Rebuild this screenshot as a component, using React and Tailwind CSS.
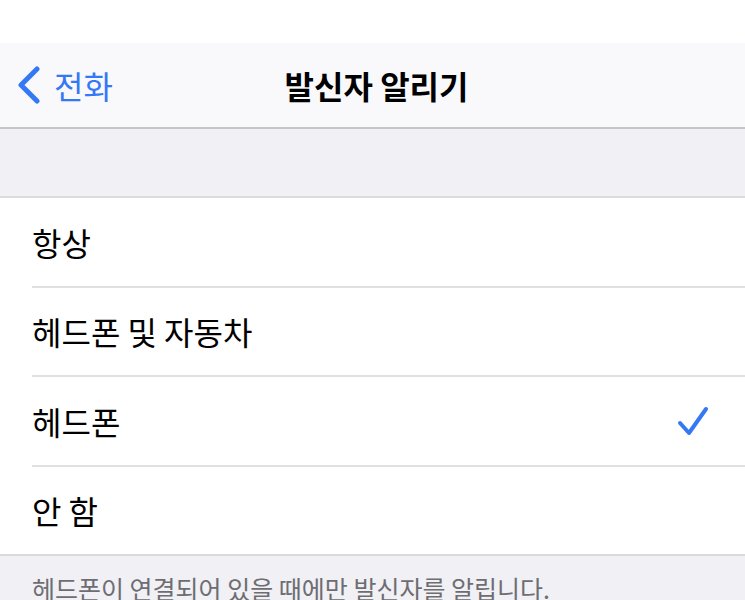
import React from 'react';

const FONT = { fontFamily: '"Noto Sans CJK KR", "Noto Sans", sans-serif' };

const options = [
    { label: '항상', checked: false },
    { label: '헤드폰 및 자동차', checked: false },
    { label: '헤드폰', checked: true },
    { label: '안 함', checked: false },
];

const Row = ({ label, checked, last }) => (
    <div className={last ? 'h-[89.5px] border-b-2 border-[#d9d9dc] bg-white' : 'bg-white pl-8'}>
        <div className={last
            ? 'h-full flex items-center pl-8 pr-9'
            : 'h-[89.5px] flex items-center pr-9 border-b-2 border-[#e0e0e3]'}>
            <span className="flex-1 text-[32px] text-black leading-none">{label}</span>
            {checked && (
                <svg width="32" height="30" viewBox="0 0 32 30" fill="none">
                    <path d="M3 17 L12 27 L29 3" stroke="#3478f6" strokeWidth="4" strokeLinecap="round" strokeLinejoin="round" />
                </svg>
            )}
        </div>
    </div>
);

export default function App() {
    return (
        <div className="w-[745px] h-[600px] overflow-hidden bg-[#f0f0f5]" style={FONT}>
            <div className="h-[43px] bg-white" />
            <div className="h-[86px] bg-[#f9f9fb] border-b-2 border-[#c6c6c9] relative flex items-center">
                <div className="flex items-center pl-[17px] text-[#3478f6]">
                    <svg width="24" height="38" viewBox="0 0 24 38" fill="none">
                        <path d="M20 3 L4 19 L20 35" stroke="#3478f6" strokeWidth="5" strokeLinecap="round" strokeLinejoin="round" />
                    </svg>
                    <span className="ml-[13px] text-[32px] leading-none">전화</span>
                </div>
                <div className="absolute inset-0 flex items-center justify-center pointer-events-none">
                    <span className="pl-2 text-[32px] font-bold text-black leading-none">발신자 알리기</span>
                </div>
            </div>
            <div className="h-[69px] bg-[#f0f0f5] border-b-2 border-[#dcdcdf]" />
            {options.map((o, i) => (
                <Row key={o.label} label={o.label} checked={o.checked} last={i === options.length - 1} />
            ))}
            <div className="pl-8 pt-[20px] text-[25px] text-[#6d6d72] leading-none">
                헤드폰이 연결되어 있을 때에만 발신자를 알립니다.
            </div>
        </div>
    );
}
